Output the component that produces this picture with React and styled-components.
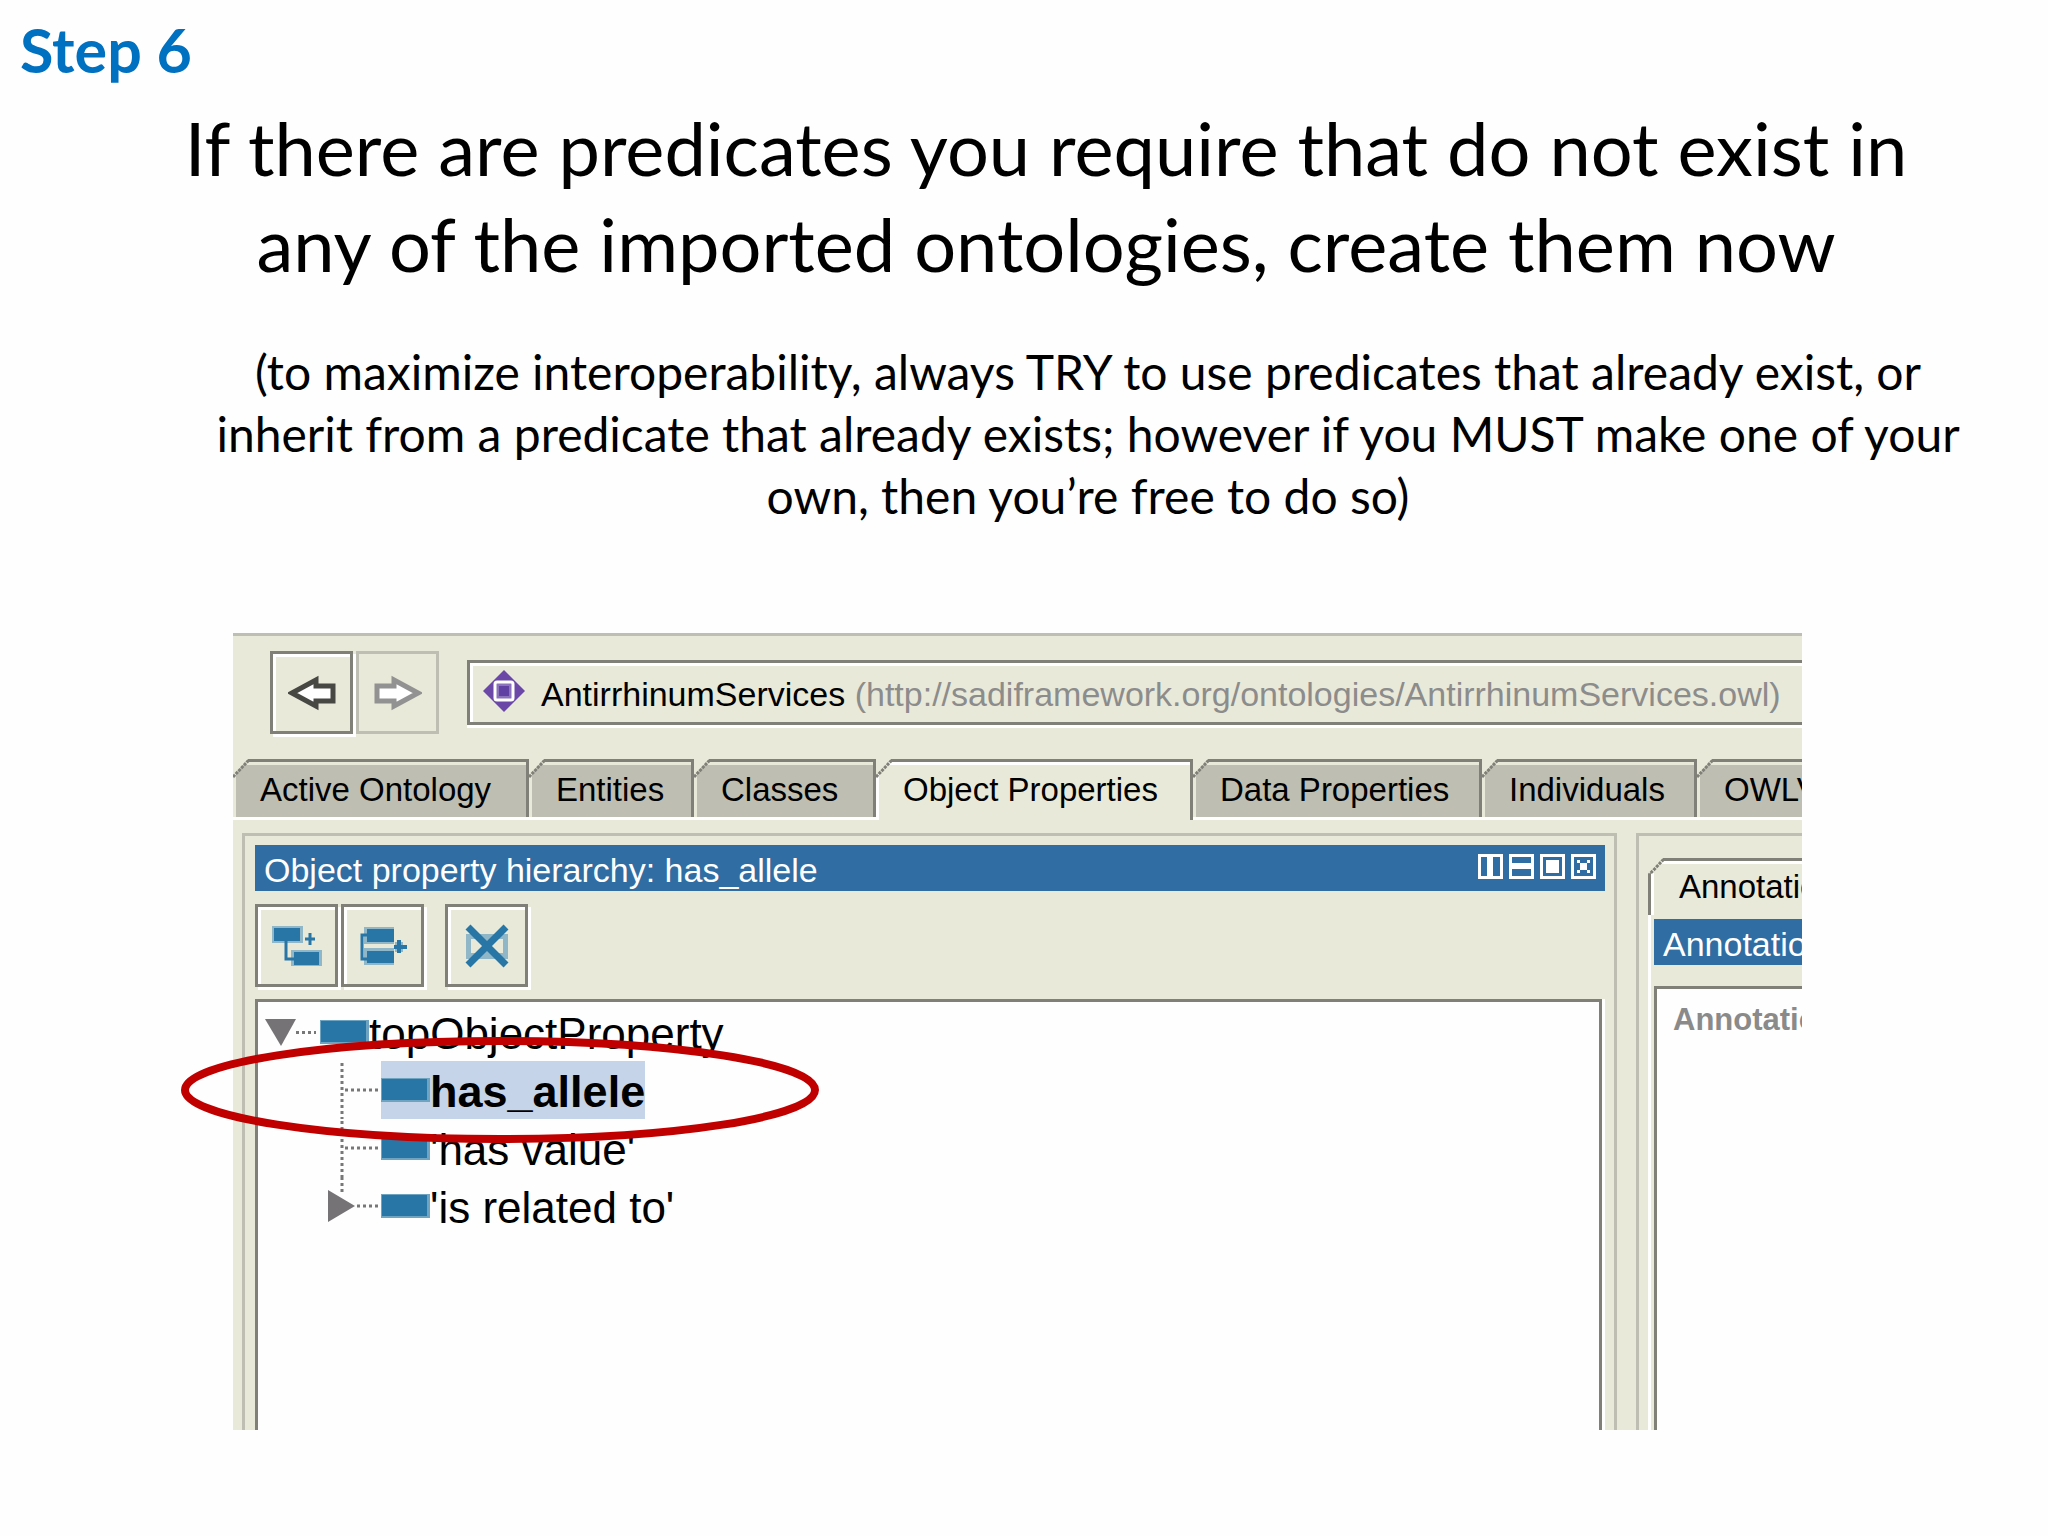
import React from 'react';
import styled, { createGlobalStyle } from 'styled-components';

const face = '#e9e9d9';
const shade = '#bebeb2';
const edge = '#808078';
const blue = '#2f6da3';
const iconBlue = '#2876a6';
const iconSoft = '#8fb7c8';

const GlobalStyle = createGlobalStyle`
  * {
    box-sizing: border-box;
  }

  body {
    margin: 0;
    background: #fefefe;
  }
`;

const Slide = styled.main`
  padding-top: 14px;
  font-family: Lato, sans-serif;
  color: #000;
`;

const Step = styled.p`
  margin: 0 0 14px;
  padding-left: 20px;
  font-size: 61px;
  line-height: 72px;
  font-weight: 700;
  color: #0070c0;
`;

const Title = styled.h1`
  margin: 0;
  padding-left: 44px;
  font-size: 74px;
  line-height: 96px;
  font-weight: 400;
  text-align: center;
`;

const Note = styled.p`
  margin: 49px 0 0;
  padding-left: 128px;
  font-size: 48px;
  line-height: 62px;
  text-align: center;
`;

const Figure = styled.section`
  position: relative;
  margin: 106px 246px 107px 233px;
`;

const Frame = styled.div`
  overflow: hidden;
  border-top: 3px solid ${shade};
  background: ${face};
  font-family: 'Liberation Sans', Arial, sans-serif;
  font-size: 34px;
  line-height: 40px;
  white-space: nowrap;
`;

const NavBar = styled.div`
  display: flex;
  align-items: center;
  gap: 3px;
  padding: 15px 0 25px 37px;
`;

const ToolButton = styled.button`
  display: flex;
  align-items: center;
  justify-content: center;
  flex: none;
  width: 83px;
  height: 83px;
  padding: 0;
  border: 3px solid ${(p) => (p.disabled ? shade : edge)};
  background: ${face};
  box-shadow: ${(p) => (p.disabled ? 'none' : 'inset 3px 3px 0 #fff, 3px 3px 0 #fff')};
`;

const Location = styled.div`
  display: flex;
  flex: 1;
  align-items: center;
  gap: 16px;
  height: 65px;
  margin-left: 25px;
  padding-left: 13px;
  border: 3px solid ${edge};
  border-right: 0;
  box-shadow: inset 3px 3px 0 #fff, 0 3px 0 #fff;
`;

const Address = styled.span`
  padding-top: 2px;
`;

const Uri = styled.span`
  color: #8c8c8c;
`;

const TabRow = styled.div`
  display: flex;
  box-shadow: inset 0 -3px 0 #fff;
`;

const Tab = styled.button`
  position: relative;
  flex: none;
  width: ${(p) => p.$width}px;
  height: ${(p) => (p.$active ? 61 : 58)}px;
  margin-bottom: ${(p) => (p.$active ? 0 : 3)}px;
  padding: 0 0 ${(p) => (p.$active ? 3 : 0)}px 27px;
  border: 0;
  border-top: 3px solid ${edge};
  border-right: 3px solid ${edge};
  background: ${(p) => (p.$active ? face : shade)};
  box-shadow: inset 3px 3px 0 ${(p) => (p.$active ? '#fff' : face)};
  font: inherit;
  font-size: 33px;
  text-align: left;
  color: #000;

  svg {
    position: absolute;
    top: -3px;
    left: 0;
  }
`;

const Workspace = styled.div`
  display: flex;
  gap: 19px;
  padding: 13px 0 0 9px;
`;

const HierarchyPanel = styled.div`
  flex: 1;
  min-width: 0;
  padding: 9px 9px 0 10px;
  border: 3px solid ${shade};
  border-bottom: 0;
`;

const PanelTitle = styled.div`
  display: flex;
  align-items: center;
  justify-content: space-between;
  height: 46px;
  padding: 0 9px;
  background: ${blue};
  color: #fff;
`;

const TitleText = styled.h2`
  margin: 0;
  padding-top: 3px;
  font-size: 34px;
  font-weight: 400;
`;

const WindowButtons = styled.div`
  display: flex;
  gap: 6px;
  padding-bottom: 4px;
`;

const WindowButton = styled.button`
  display: flex;
  padding: 0;
  border: 0;
  background: none;
`;

const Toolbar = styled.div`
  display: flex;
  gap: 3px;
  padding: 13px 0 12px;
`;

const Gap = styled.div`
  width: 15px;
`;

const Tree = styled.ul`
  height: 431px;
  margin: 0 3px 0 0;
  padding: 1px 0 0 7px;
  border: 3px solid ${edge};
  border-bottom: 0;
  background: #fefefe;
  box-shadow: 3px 0 0 #fff;
  list-style: none;
  font-size: 44px;
  line-height: 58px;
`;

const Branch = styled.ul`
  margin: 0;
  padding: 0 0 0 62px;
  list-style: none;
`;

const Row = styled.div`
  display: flex;
  align-items: center;
  height: 58px;
`;

const Node = styled.span`
  display: flex;
  align-items: center;
  height: 58px;
  background: ${(p) => (p.$selected ? '#c5d4e8' : 'transparent')};
  font-size: ${(p) => (p.$selected ? 45 : 44)}px;
  font-weight: ${(p) => (p.$selected ? 700 : 400)};
`;

const NodeName = styled.span`
  padding-top: 3px;
`;

const Swatch = styled.span`
  width: 49px;
  height: 24px;
  border: 2px solid #6fa3c2;
  border-width: 1px 3px 2px 1px;
  background: ${iconBlue};
`;

const SidePanel = styled.div`
  flex: none;
  width: 166px;
  overflow: hidden;
  padding: 22px 0 0 9px;
  border: 3px solid ${shade};
  border-width: 3px 0 0 3px;
`;

const SideTab = styled.button`
  position: relative;
  display: block;
  width: 100%;
  height: 57px;
  padding: 0 0 2px 28px;
  border: 0;
  border-top: 3px solid ${edge};
  border-left: 3px solid ${edge};
  background: ${face};
  box-shadow: inset 3px 3px 0 #fff;
  font: inherit;
  font-size: 33px;
  text-align: left;
  color: #000;

  svg {
    position: absolute;
    top: -3px;
    left: -3px;
  }
`;

const SideBody = styled.div`
  padding: 4px 0 0 3px;
  border-left: 3px solid #fff;
`;

const SideList = styled.div`
  height: 444px;
  margin-top: 21px;
  padding: 14px 0 0 16px;
  border: 3px solid ${edge};
  border-width: 3px 0 0 3px;
  background: #fefefe;
  font-size: 31px;
  line-height: 34px;
  font-weight: 700;
  color: #8a8a8a;
`;

const Ring = styled.svg`
  position: absolute;
  top: 404px;
  left: -52px;
`;

const Corner = () => (
  <svg width="18" height="19" viewBox="0 0 18 19" aria-hidden="true">
    <path d="M0 0H15L0 18Z" fill={face} />
    <path d="M0 18L15 2" stroke={edge} strokeWidth="3" strokeDasharray="3 1" fill="none" />
  </svg>
);

const Arrow = ({ color, flip }) => (
  <svg width="48" height="38" viewBox="0 0 48 38" aria-hidden="true">
    <path
      d="M4 19L28 6V12H45V27H28V32Z"
      transform={flip ? 'matrix(-1 0 0 1 48 0)' : undefined}
      fill="#fff"
      stroke={color}
      strokeWidth="5"
    />
  </svg>
);

const OntologyIcon = () => (
  <svg width="42" height="46" viewBox="0 0 42 46" aria-hidden="true">
    <path d="M21 0L42 21L21 42L0 21Z" fill="#6b48a8" />
    <rect x="12" y="12" width="18" height="18" rx="2" fill="#8c72bc" stroke="#fff" strokeWidth="3" />
    <rect x="16" y="16" width="10" height="10" fill="#6040a2" />
  </svg>
);

const AddChildIcon = () => (
  <svg width="50" height="42" viewBox="0 0 50 42" aria-hidden="true">
    <path d="M0 1H31V18H0ZM19 25H50V41H19Z" fill={iconSoft} />
    <path d="M14 14V34H22" fill="none" stroke={iconBlue} strokeWidth="3" />
    <path d="M2 3H28V16H2ZM22 27H47V40H22Z" fill={iconBlue} />
    <path d="M38 8V20M33 14H43" stroke={iconBlue} strokeWidth="3" />
  </svg>
);

const AddSiblingIcon = () => (
  <svg width="48" height="42" viewBox="0 0 48 42" aria-hidden="true">
    <path d="M5 2H35V19H5ZM5 23H35V40H5Z" fill={iconSoft} />
    <path d="M8 10H3V34H8" fill="none" stroke={iconBlue} strokeWidth="3" />
    <path d="M8 4H35V17H8ZM8 26H35V38H8Z" fill={iconBlue} />
    <path d="M36 17H44V27H36Z" fill={iconSoft} />
    <path d="M40 15V28M35 22H48" stroke={iconBlue} strokeWidth="4" />
  </svg>
);

const DeleteIcon = () => (
  <svg width="44" height="44" viewBox="0 0 44 44" aria-hidden="true">
    <path d="M1 10H43V35H1Z" fill={iconSoft} />
    <path d="M6 15H12L18 22L12 29H6ZM38 15H32L26 22L32 29H38Z" fill={face} />
    <path d="M3 3L41 41M41 3L3 41" stroke={iconBlue} strokeWidth="7" />
    <path d="M17 17H27V27H17Z" fill={iconBlue} />
  </svg>
);

const windowIcons = [
  ['Split vertically', 'M9 3H15V22H9Z'],
  ['Split horizontally', 'M3 9H22V15H3Z'],
  ['Float', 'M6 6H19V19H6Z'],
  ['Close', 'M6 6H9V9H16V6H19V9H16V16H19V19H16V16H9V19H6V16H9V9H6Z'],
];

const Dots = ({ width }) => (
  <svg width={width} height="3" aria-hidden="true">
    <path d={`M0 1.5H${width - 4}`} stroke="#777" strokeWidth="3" strokeDasharray="3 3" />
  </svg>
);

// Guide lines in front of a child node, with an arrow when it can be opened
const Guide = ({ expandable }) => (
  <svg width="54" height="58" viewBox="0 0 54 58" aria-hidden="true">
    <path
      d={expandable ? 'M15 0V16' : 'M15 2V58'}
      stroke="#777"
      strokeWidth="3"
      strokeDasharray="3 3"
    />
    <path d={expandable ? 'M30 29H51' : 'M18 29H51'} stroke="#777" strokeWidth="3" strokeDasharray="3 3" />
    {expandable && <path d="M1 13L28 29L1 45Z" fill="#757375" />}
  </svg>
);

const tabs = [
  { name: 'Active Ontology', width: 296 },
  { name: 'Entities', width: 165 },
  { name: 'Classes', width: 182 },
  { name: 'Object Properties', width: 317, active: true },
  { name: 'Data Properties', width: 289 },
  { name: 'Individuals', width: 215 },
  { name: 'OWLViz', width: 170 },
];

const children = [
  { name: 'has_allele', selected: true },
  { name: "'has value'" },
  { name: "'is related to'", expandable: true },
];

const App = () => (
  <Slide>
    <GlobalStyle />
    <Step>Step 6</Step>
    <Title>
      If there are predicates you require that do not exist in
      <br />
      any of the imported ontologies, create them now
    </Title>
    <Note>
      (to maximize interoperability, always TRY to use predicates that already exist, or
      <br />
      inherit from a predicate that already exists; however if you MUST make one of your
      <br />
      own, then you’re free to do so)
    </Note>

    <Figure>
      <Frame>
        <NavBar>
          <ToolButton aria-label="Back">
            <Arrow color="#474744" />
          </ToolButton>
          <ToolButton aria-label="Forward" disabled>
            <Arrow color="#929292" flip />
          </ToolButton>
          <Location>
            <OntologyIcon />
            <Address>
              AntirrhinumServices{' '}
              <Uri>(http://sadiframework.org/ontologies/AntirrhinumServices.owl)</Uri>
            </Address>
          </Location>
        </NavBar>

        <TabRow>
          {tabs.map((tab) => (
            <Tab key={tab.name} $width={tab.width} $active={tab.active}>
              <Corner />
              {tab.name}
            </Tab>
          ))}
        </TabRow>

        <Workspace>
          <HierarchyPanel>
            <PanelTitle>
              <TitleText>Object property hierarchy: has_allele</TitleText>
              <WindowButtons>
                {windowIcons.map(([label, shape]) => (
                  <WindowButton key={label} aria-label={label}>
                    <svg width="25" height="25" viewBox="0 0 25 25" aria-hidden="true">
                      <rect x="1.5" y="1.5" width="22" height="22" fill="none" stroke="#fff" strokeWidth="3" />
                      <path d={shape} fill="#fff" />
                    </svg>
                  </WindowButton>
                ))}
              </WindowButtons>
            </PanelTitle>
            <Toolbar>
              <ToolButton aria-label="Add sub property">
                <AddChildIcon />
              </ToolButton>
              <ToolButton aria-label="Add sibling property">
                <AddSiblingIcon />
              </ToolButton>
              <Gap />
              <ToolButton aria-label="Delete property">
                <DeleteIcon />
              </ToolButton>
            </Toolbar>
            <Tree>
              <li>
                <Row>
                  <svg width="31" height="27" viewBox="0 0 31 27" aria-hidden="true">
                    <path d="M0 0H31L16 27Z" fill="#757375" />
                  </svg>
                  <Dots width={24} />
                  <Node>
                    <Swatch />
                    <NodeName>topObjectProperty</NodeName>
                  </Node>
                </Row>
                <Branch>
                  {children.map((node) => (
                    <li key={node.name}>
                      <Row>
                        <Guide expandable={node.expandable} />
                        <Node $selected={node.selected}>
                          <Swatch />
                          <NodeName>{node.name}</NodeName>
                        </Node>
                      </Row>
                    </li>
                  ))}
                </Branch>
              </li>
            </Tree>
          </HierarchyPanel>

          <SidePanel>
            <SideTab>
              <Corner />
              Annotations
            </SideTab>
            <SideBody>
              <PanelTitle>
                <TitleText>Annotations</TitleText>
              </PanelTitle>
              <SideList>Annotations</SideList>
            </SideBody>
          </SidePanel>
        </Workspace>
      </Frame>

      <Ring width="638" height="106" viewBox="0 0 638 106" aria-hidden="true">
        <ellipse cx="319" cy="53" rx="315" ry="49" fill="none" stroke="#c00000" strokeWidth="8" />
      </Ring>
    </Figure>
  </Slide>
);

export default App;
